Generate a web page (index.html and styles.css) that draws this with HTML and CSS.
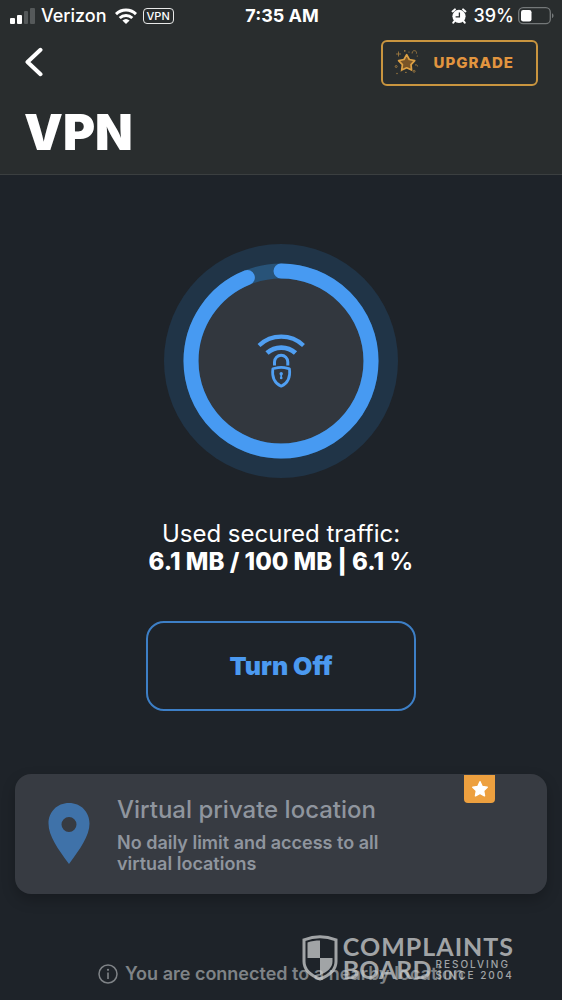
FILE: index.html
```html
<!DOCTYPE html>
<html lang="en">
<head>
<meta charset="utf-8">
<meta name="viewport" content="width=device-width, initial-scale=1">
<title>VPN</title>
<link rel="stylesheet" href="styles.css">
</head>
<body>
<div class="app">
  <header class="header">
    <div class="status">
      <div class="status-left">
        <svg class="signal" viewBox="0 0 26 16" aria-hidden="true">
          <g fill="#fff"><rect x="0" y="10" width="5" height="6" rx="1"/><rect x="7" y="7" width="5" height="9" rx="1"/></g>
          <g fill="#55595a"><rect x="14" y="3" width="4" height="13" rx="1"/><rect x="20" y="0" width="5" height="16" rx="1"/></g>
        </svg>
        <span class="carrier">Verizon</span>
        <svg class="wifi" viewBox="0 0 22 16" aria-hidden="true">
          <g fill="none" stroke="#fff" stroke-width="3"><path d="M1 6.100a14.400 14.400 0 0 1 20 0"/><path d="M4.700 10a9.200 9.200 0 0 1 12.600 0"/></g>
          <path d="M7.400 12.600a5.400 5.400 0 0 1 7.200 0L11 16z" fill="#fff"/>
        </svg>
        <span class="vpn-tag">VPN</span>
      </div>
      <span class="clock">7:35 AM</span>
      <div class="status-right">
        <svg class="alarm" viewBox="0 0 16 16" aria-hidden="true">
          <g stroke="#fff" stroke-width="2" stroke-linecap="round"><path d="M1.600 3.400 3.900 1.400M14.400 3.400 12.100 1.400M3.500 13 2.300 14.700M12.500 13l1.200 1.700"/></g>
          <circle cx="8" cy="8.300" r="6.600" fill="#fff"/>
          <path d="M8.400 4.400v4.500H4.600" fill="none" stroke="#292d2e" stroke-width="1.300"/>
        </svg>
        <span class="percent">39%</span>
        <svg class="battery" viewBox="0 0 36 18" aria-hidden="true">
          <rect x=".7" y=".7" width="31.600" height="16" rx="4.500" fill="none" stroke="#747879" stroke-width="1.300"/>
          <rect x="3" y="3" width="10.500" height="11.500" rx="2.200" fill="#fff"/>
          <path d="M34 6.300c2 .8 2 4 0 4.800z" fill="#747879"/>
        </svg>
      </div>
    </div>
    <nav class="nav">
      <button class="back" aria-label="Back">
        <svg viewBox="0 0 20 32" aria-hidden="true"><path d="M16.500 2.800 3.500 15l13 12.200" fill="none" stroke="#fff" stroke-width="4" stroke-linecap="round" stroke-linejoin="round"/></svg>
      </button>
      <button class="upgrade">
        <svg viewBox="0 0 26 28" aria-hidden="true">
          <path d="m12.700 5.700 2.600 4.800 5.400 1.100-3.700 4 .6 5.500-4.900-2.300-5 2.300.7-5.500-3.800-4 5.400-1.100z" fill="#795427" stroke="#dca044" stroke-width="1.700" stroke-linejoin="round"/>
          <g fill="none" stroke="#a98242" stroke-width=".8"><path d="M4.500 2.500v5M2 5h5M18.100 4.500c-.4-4 5.500-3.600 4.300.2M21 16c1.500-.6 2.700.2 2.600 1.500M11 23.400h1.800"/><circle cx="2.200" cy="17.500" r="1"/><circle cx="20.100" cy="22.300" r="1"/></g>
          <g fill="#a98242"><circle cx="10.800" cy="1.900" r=".8"/><circle cx="3" cy="24.500" r=".7"/><circle cx="7" cy="22" r=".6"/><circle cx="15" cy="3" r=".6"/><circle cx="23.300" cy="7" r=".6"/></g>
        </svg>
        <span>UPGRADE</span>
      </button>
    </nav>
    <h1 class="title">VPN</h1>
  </header>

  <main class="main">
    <svg class="ring" viewBox="0 0 234 234" role="img" aria-label="VPN is on">
      <circle cx="117" cy="117" r="117" fill="#203447"/>
      <circle cx="117" cy="117" r="90" fill="#32373e" stroke="#285378" stroke-width="15"/>
      <circle cx="117" cy="117" r="90" fill="none" stroke="#479af2" stroke-width="15" stroke-linecap="round" pathLength="100" stroke-dasharray="93.9 100" transform="rotate(-90 117 117)"/>
      <g fill="none" stroke="#509ff2">
        <path d="M95 101.500a32.500 32.500 0 0 1 44.500 0" stroke-width="4.200"/>
        <path d="M103 109a21.300 21.300 0 0 1 28.500 0" stroke-width="4.800"/>
        <path d="M110.500 121.500v-3.500a6.600 6.600 0 0 1 13.300 0v3.500" stroke-width="3"/>
        <path d="M117.200 123.300c-3 0-5.300.7-8.400 1.500-1 8 1.900 14.400 8.400 17.400 6.500-3 9.300-9.400 8.300-17.400-3-.8-5.300-1.500-8.300-1.500z" stroke-width="2.700" stroke-linejoin="round"/>
        <path d="M117.200 129v6" stroke-width="1.700"/>
      </g>
      <circle cx="117.200" cy="129.700" r="1.700" fill="#509ff2"/><circle cx="117.200" cy="134" r="1.300" fill="#509ff2"/>
    </svg>
    <p class="traffic">Used secured traffic:<br><strong>6.1 MB / 100 MB | 6.1 <span class="unit">%</span></strong></p>
    <button class="toggle">Turn Off</button>

    <button class="card">
      <svg class="pin" viewBox="0 0 42 62" aria-hidden="true"><path fill="#3f72a9" fill-rule="evenodd" d="M21 0C9 0 .5 9 .5 20.500.5 33 10 46 21 61c11-15 20.500-28 20.500-40.500C41.500 9 33 0 21 0zm0 14a7.500 7.500 0 1 1 0 15 7.500 7.500 0 0 1 0-15z"/></svg>
      <span class="card-text">
        <span class="card-title">Virtual private location</span>
        <span class="card-sub">No daily limit and access to all<br>virtual locations</span>
      </span>
      <span class="badge">
        <svg viewBox="0 0 18 18" aria-hidden="true"><path d="m9 1.800 2.200 4.700 5 .7-3.600 3.500.9 5.100L9 13.400l-4.500 2.400.9-5.100L1.800 7.200l5-.7z" fill="#fff" stroke="#fff" stroke-width="1.500" stroke-linejoin="round"/></svg>
      </span>
    </button>

    <p class="note">
      <svg viewBox="0 0 20 20" aria-hidden="true"><circle cx="10" cy="10" r="9" fill="none" stroke="currentColor" stroke-width="1.500"/><path d="M10 8.500v6.500" stroke="currentColor" stroke-width="1.600"/><circle cx="10" cy="5.800" r="1.100" fill="currentColor"/></svg>
      <span>You are connected to a nearby location</span>
    </p>
  </main>

  <div class="mark">
    <svg viewBox="0 0 36 46" aria-hidden="true">
      <path d="M18 1.800c-5.500 0-10.500 1-16 3v21.700c0 8 7 14 16 17.500 9-3.500 16-9.500 16-17.500V4.800c-5.500-2-10.500-3-16-3z" fill="none" stroke="currentColor" stroke-width="3"/>
      <path d="M18 5.500v17.500H5.500V7.400C9.500 6 13.500 5.500 18 5.500zM18 23h12.500v3.500c0 6-5 10.500-12.500 13.500z" fill="currentColor"/>
    </svg>
    <div class="mark-text">
      <div class="mark-big mark-wide">COMPLAINTS</div>
      <div class="mark-row">
        <span class="mark-big">BOARD</span>
        <span class="mark-small">RESOLVING<br>SINCE 2004</span>
      </div>
    </div>
  </div>
</div>
</body>
</html>
```
FILE: styles.css
```css
* { box-sizing: border-box; }
body {
  margin: 0;
  background: #1e2329;
  color: #fff;
  font-family: Inter, "Liberation Sans", sans-serif;
}
button {
  font: inherit;
  color: inherit;
  background: none;
  border: 0;
  padding: 0;
}
svg { display: block; flex: none; }
.app {
  position: relative;
  min-height: 100vh;
  overflow: hidden;
}

.header {
  background: #292d2e;
  border-bottom: 1px solid #3b3f40;
  padding-bottom: 11px;
}
.status {
  display: grid;
  grid-template-columns: 1fr auto 1fr;
  align-items: center;
  height: 32px;
  padding: 0 8px 0 10px;
  font-size: 18px;
  line-height: 24px;
  font-weight: 500;
}
.status-left, .status-right { display: flex; align-items: center; }
.status-right { justify-content: flex-end; }
.signal { width: 26px; height: 16px; margin-right: 5px; }
.wifi { width: 22px; height: 16px; margin: 0 6px 0 8px; }
.vpn-tag {
  border: 1px solid #e8e9e9;
  border-radius: 4px;
  height: 16px;
  padding: 0 3px;
  font-size: 11px;
  line-height: 14px;
}
.clock { font-weight: 700; }
.alarm { width: 16px; height: 16px; margin-right: 7px; }
.battery { width: 36px; height: 18px; margin-left: 4px; }

.nav {
  display: flex;
  justify-content: space-between;
  align-items: center;
  padding: 8px 24px 0;
}
.back svg { width: 20px; height: 32px; }
.upgrade {
  display: flex;
  align-items: center;
  gap: 14px;
  height: 46px;
  padding: 0 22px 0 11px;
  border: 2px solid #c9953f;
  border-radius: 6px;
  color: #e2953f;
  font-size: 15px;
  line-height: 20px;
  font-weight: 800;
  letter-spacing: 1px;
}
.upgrade svg { width: 26px; height: 28px; }
.title {
  margin: 17px 24px 0;
  font-size: 49px;
  line-height: 60px;
  font-weight: 900;
}

.main {
  display: flex;
  flex-direction: column;
  align-items: center;
  padding: 69px 15px 12px;
}
.ring { width: 234px; height: 234px; }
.traffic {
  margin: 42px 0 0;
  text-align: center;
  font-size: 24px;
  line-height: 28px;
}
.traffic strong { font-weight: 800; }
.traffic .unit { font-weight: 600; }
.toggle {
  width: 270px;
  height: 90px;
  margin-top: 45px;
  border: 2px solid #3d7fc6;
  border-radius: 18px;
  color: #4b99f0;
  font-size: 25px;
  font-weight: 900;
}
.card {
  position: relative;
  display: flex;
  align-items: center;
  gap: 27px;
  align-self: stretch;
  height: 120px;
  margin-top: 63px;
  padding: 0 33px;
  border-radius: 16px;
  background: #373b42;
  box-shadow: 0 6px 14px rgba(0, 0, 0, 0.22);
  color: #8f959e;
  text-align: left;
}
.pin { width: 42px; height: 62px; }
.card-text { display: flex; flex-direction: column; gap: 7px; }
.card-title { font-size: 24px; line-height: 30px; font-weight: 500; }
.card-sub { font-size: 18px; line-height: 21px; font-weight: 600; }
.badge {
  position: absolute;
  top: 1px;
  right: 52px;
  width: 31px;
  height: 28px;
  display: grid;
  place-items: center;
  border-radius: 0 0 4px 4px;
  background: #eda03f;
}
.badge svg { width: 18px; height: 18px; }
.note {
  display: flex;
  align-items: center;
  gap: 7px;
  margin: 68px 0 0;
  color: #7f8387;
  font-size: 18px;
  line-height: 24px;
  font-weight: 600;
}
.note svg { width: 20px; height: 20px; }

.mark {
  position: absolute;
  right: 48px;
  bottom: 19px;
  display: flex;
  align-items: center;
  gap: 5px;
  color: #cdcfd0;
  opacity: 0.75;
  font-family: Lato, sans-serif;
}
.mark > svg { width: 36px; height: 46px; }
.mark-big { font-size: 25px; line-height: 23px; font-weight: 700; }
.mark-wide { letter-spacing: 1px; }
.mark-row { display: flex; align-items: center; gap: 4px; }
.mark-small {
  font-family: Inter, sans-serif;
  font-size: 10px;
  line-height: 11px;
  font-weight: 500;
  letter-spacing: 2px;
}
```
